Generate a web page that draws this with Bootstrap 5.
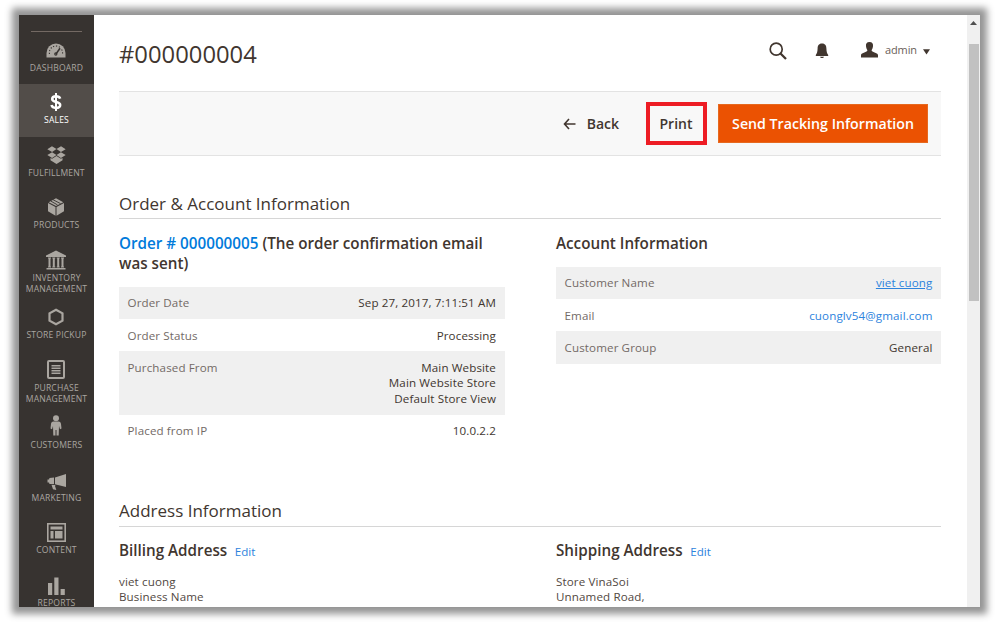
<!DOCTYPE html>
<html lang="en">
<head>
<meta charset="utf-8">
<title>#000000004</title>
<link href="https://cdn.jsdelivr.net/npm/bootstrap@5.3.0/dist/css/bootstrap.min.css" rel="stylesheet">
<style>
body{background:#fff;font-family:"Open Sans",sans-serif;width:999px;height:622px;overflow:hidden;padding:15px 19px}
.frame{width:961px;height:592px;background:#fff;box-shadow:0 0 7px 7px #959595;overflow:hidden}
.side{width:75px;background:#373330;color:#aaa6a0;flex:none}
.side-top{height:16.5px;padding:16px 12px 0}
.side-top div{height:1px;background:#736963}
.side-item{height:52.5px;font-size:8.6px;line-height:11px;letter-spacing:.16px;text-align:center;color:#aaa6a0;text-decoration:none;flex:none}
.side-item.tall{height:57.5px}
.side-item.on{background:#524d49;color:#fff}
.side-item .ico{height:24px;margin-top:6px;margin-bottom:1px;margin-right:1px;flex:none}
.side-item svg{fill:currentColor;display:block}
.main-in{margin-left:25px;width:822px}
.head{height:76px}
.head h1{font-size:23.8px;line-height:30px;margin:24px 0 0;color:#41362f;font-weight:400}
.tools{padding:27px 11px 0 0;height:100%}
.bell{margin-left:28px}
.person{margin-left:32px}
.caret{margin:7px 0 0 6px}
.user{font-size:11px;color:#6a6058;line-height:16px;letter-spacing:-.1px}
.tools .user{margin-left:7px}
.bar{height:65px;background:#f8f8f8;border-top:1px solid #e3e3e3;border-bottom:1px solid #e3e3e3;padding-right:13px;font-size:14px;font-weight:600;color:#41362f}
.back-label{margin-left:11px}
.print{width:61px;height:43px;border:4px solid #ed1c24;margin:0 11px 1px 27px;padding:1px 1px 0 0}
.send{width:210px;height:39px;background:#eb5202;color:#fff;border-radius:0;font-size:14.2px;font-weight:600;padding:0;text-align:center;border:1px solid #e6691f}
.sect{font-size:17px;line-height:22px;border-bottom:1px solid #d6d6d6;margin:0;font-weight:400;color:#41362f;padding-bottom:3.5px}
.sect-first{margin-top:36.5px;padding-bottom:3px}
.sub{font-size:15.23px;line-height:20px;font-weight:600;margin:0;color:#41362f;white-space:nowrap}
.halves{display:grid;grid-template-columns:385.5px 385px;column-gap:51.5px}
.order-halves{padding-top:14.2px;height:281.5px}
.order-halves .sub{margin-bottom:13.9px}
.address-halves{padding-top:13.5px}
.kv{padding:8.6px 8.5px 8.3px;line-height:15.5px;font-size:11.6px;color:#41362f;letter-spacing:.12px}
.kv:nth-child(odd){background:#f0f0f0}
.kv span:first-child{color:#736a66}
.kv a,.edit{color:#2d83dd}
.edit{font-size:11.6px;font-weight:400;margin-left:7.5px;text-decoration:none}
.big{color:#007bdb;text-decoration:none}
.addr{font-size:11.6px;line-height:15.5px;color:#524842;letter-spacing:.12px;margin:11.5px 0 0}
.scroll{width:13px;background:#f0f0f0;flex:none}
.scroll svg{margin:5.5px 0 19.5px}
.thumb{width:10px;height:257px;background:#c1c1c1}
</style>
</head>
<body>
<div class="frame d-flex">
  <nav class="side d-flex flex-column overflow-hidden">
    <div class="side-top"><div></div></div>
    <a class="side-item d-flex flex-column align-items-center" href="#" ><span class="ico d-flex align-items-center"><svg width="20" height="20" viewBox="0 0 20 20"><path d="M.5 17.500V13a9.500 9.500 0 0 1 19 0v4.500z"/><g fill="none" stroke="#373330" stroke-width="1.100"><path d="M3.500 14a6.600 6.600 0 0 1 11-6.200M15.600 9.500a6.500 6.500 0 0 1 .9 4.500" stroke-dasharray="1.200 1.700"/><path d="M9.700 14.400 14 8.300" stroke-width="1.600"/><circle cx="9.800" cy="14" r="1.100"/></g></svg></span>DASHBOARD</a>
    <a class="side-item on d-flex flex-column align-items-center" href="#"><span class="ico d-flex align-items-center"><svg width="12" height="18" viewBox="0 0 12 18"><path d="M6 0v18" stroke="#fff" stroke-width="2"/><path d="M10.200 5.600C9.600 3.900 8 3.200 6 3.200 3.700 3.200 2.200 4.300 2.200 6c0 4 8 2 8 6 0 1.900-1.700 2.900-4.200 2.900-2.300 0-4-.9-4.500-2.900" fill="none" stroke="#fff" stroke-width="2.500"/></svg></span>SALES</a>
    <a class="side-item d-flex flex-column align-items-center" href="#"><span class="ico d-flex align-items-center"><svg width="19" height="18" viewBox="0 0 18 18" preserveAspectRatio="none"><path d="M4.700.3 9 3 4.800 5.900.3 3.200zM13.300.3 9 3l4.200 2.900 4.500-2.700zM4.800 6.300 9 9l-4.200 2.900L.3 9zM13.200 6.300 9 9l4.200 2.900L17.700 9zM9 10l4.200 2.800 1.500-.8v2.300L9 18l-5.700-3.700V12l1.500.8z"/></svg></span>FULFILLMENT</a>
    <a class="side-item d-flex flex-column align-items-center" href="#"><span class="ico d-flex align-items-center"><svg width="16" height="18" viewBox="0 0 16 18"><path d="M8.500 9 16 5v8.300L8.500 17.700zM0 5l7.500 4v8.700L0 13.300zM.7 4.200 8 .2l7.300 4L8 8.100z"/><path d="M2.700 3 9.500 6.900M5 1.700 12.500 5.600" fill="none" stroke="#373330" stroke-width=".9"/></svg></span>PRODUCTS</a>
    <a class="side-item tall d-flex flex-column align-items-center" href="#"><span class="ico d-flex align-items-center"><svg width="20" height="20" viewBox="0 0 20 20"><path d="M10 .5 20 5.500v1.500H0V5.500zM2 7.500h3v1H4.500v8H5v1H2v-1h.5v-8H2zM6.300 7.500h3v1h-.5v8h.5v1h-3v-1h.5v-8h-.5zM10.700 7.500h3v1h-.5v8h.5v1h-3v-1h.5v-8h-.5zM15 7.500h3v1h-.5v8h.5v1h-3v-1h.5v-8H15zM.5 18h19v1.500H.5z"/></svg></span>INVENTORY<br>MANAGEMENT</a>
    <a class="side-item d-flex flex-column align-items-center" href="#"><span class="ico d-flex align-items-center"><svg width="16" height="18" viewBox="0 0 16 18"><path d="M8 1.700 14.500 5.300v7.400L8 16.300 1.500 12.700V5.300z" fill="none" stroke="currentColor" stroke-width="2.200"/></svg></span>STORE PICKUP</a>
    <a class="side-item tall d-flex flex-column align-items-center" href="#"><span class="ico d-flex align-items-center"><svg width="18" height="19" viewBox="0 0 18 19"><rect x="1" y="1" width="16" height="17" rx="1" fill="none" stroke="currentColor" stroke-width="2"/><path d="M4.500 5h9v1.400h-9zM4.500 7.500h9v1.400h-9zM4.500 10h9v1.400h-9zM4.500 12.500h9v1.400h-9z"/></svg></span>PURCHASE<br>MANAGEMENT</a>
    <a class="side-item d-flex flex-column align-items-center" href="#"><span class="ico d-flex align-items-start"><svg width="12" height="21" viewBox="0 0 12 21"><circle cx="6" cy="3.200" r="3"/><path d="M3.500 6.500h5c1.700 0 2.300 1 2.500 2.500l.5 4.500-1.500.7-1-3.200-.3 9.500H6.500V15h-1v5.500H3.300L3 11l-1 3.200-1.500-.7L1 9c.2-1.500.8-2.500 2.500-2.500z"/></svg></span>CUSTOMERS</a>
    <a class="side-item d-flex flex-column align-items-center" href="#"><span class="ico d-flex align-items-end"><svg width="19" height="18" viewBox="0 0 19 18"><path d="M19 0v13L8 10.300V3.500zM7 3.600v6.500H2.500L2 8.500H.5v-3H2l.5-1.500zM4.500 10.800l4 .3-.5 1 1.300 4L6 15.300z"/></svg></span>MARKETING</a>
    <a class="side-item d-flex flex-column align-items-center" href="#"><span class="ico d-flex align-items-center"><svg width="19" height="19" viewBox="0 0 19 19"><rect x=".8" y=".8" width="17.400" height="17.400" fill="none" stroke="currentColor" stroke-width="1.600"/><path d="M3.500 3.500h12v3h-12zM3.500 8h3v7.500h-3zM8 8h7.500v7.500H8z"/></svg></span>CONTENT</a>
    <a class="side-item d-flex flex-column align-items-center" href="#"><span class="ico d-flex align-items-end"><svg width="17" height="20" viewBox="0 0 17 20"><path d="M0 6h4.200v12H0zM6.300.500h4.200V18H6.300zM12.600 12h4.200v6h-4.200z"/></svg></span>REPORTS</a>
  </nav>
  <main class="flex-grow-1 overflow-hidden">
    <div class="main-in">
      <header class="head d-flex justify-content-between">
        <h1>#000000004</h1>
        <div class="tools d-flex align-items-start">
          <svg width="18" height="18" viewBox="0 0 18 18" fill="none" stroke="#41362f"><circle cx="7.200" cy="7.200" r="6" stroke-width="1.700"/><path d="m11.500 11.500 5.500 5.500" stroke-width="2.300"/></svg>
          <svg class="bell" width="14" height="17" viewBox="0 0 14 17" fill="#41362f"><path d="M7 1.500c3.500 0 4.300 2.400 4.400 5 .1 3.500.7 4.700 1.800 6.500v1H.8v-1c1.100-1.800 1.700-3 1.800-6.500.1-2.600.9-5 4.400-5zM5 14.700h4C8.700 16.500 5.300 16.500 5 14.700z"/></svg>
          <svg class="person" width="17" height="16" viewBox="0 0 17 16" fill="#41362f"><path d="M8.500 0c2.800 0 3.800 1.800 3.500 4.300-.2 2-1 3.200-1.400 4 0 2 5.900 2.200 6.400 4.700V15.500H0V13c.5-2.500 6.400-2.700 6.400-4.700C6 7.500 5.200 6.300 5 4.300 4.700 1.800 5.700 0 8.500 0z"/></svg>
          <span class="user">admin</span>
          <svg class="caret" width="7" height="6" viewBox="0 0 7 6"><path d="M0 .3h7L3.500 5.500z" fill="#41362f"/></svg>
        </div>
      </header>
      <div class="bar d-flex align-items-center justify-content-end">
        <svg width="13" height="12" viewBox="0 0 13 12" fill="none" stroke="#41362f" stroke-width="1.600"><path d="M6 1 1.500 6 6 11M1.500 6h11"/></svg>
        <span class="back-label">Back</span>
        <div class="print d-flex align-items-center justify-content-center">Print</div>
        <button class="btn send">Send Tracking Information</button>
      </div>
      <h2 class="sect sect-first">Order &amp; Account Information</h2>
      <div class="halves order-halves">
        <section>
          <h3 class="sub"><a class="big" href="#">Order # 000000005</a> (The order confirmation email<br>was sent)</h3>
          <div>
            <div class="kv d-flex justify-content-between"><span>Order Date</span><span>Sep 27, 2017, 7:11:51 AM</span></div>
            <div class="kv d-flex justify-content-between"><span>Order Status</span><span>Processing</span></div>
            <div class="kv d-flex justify-content-between"><span>Purchased From</span><span class="text-end">Main Website<br>Main Website Store<br>Default Store View</span></div>
            <div class="kv d-flex justify-content-between"><span>Placed from IP</span><span>10.0.2.2</span></div>
          </div>
        </section>
        <section>
          <h3 class="sub">Account Information</h3>
          <div>
            <div class="kv d-flex justify-content-between"><span>Customer Name</span><a href="#">viet cuong</a></div>
            <div class="kv d-flex justify-content-between"><span>Email</span><a class="text-decoration-none" href="#">cuonglv54@gmail.com</a></div>
            <div class="kv d-flex justify-content-between"><span>Customer Group</span><span>General</span></div>
          </div>
        </section>
      </div>
      <h2 class="sect">Address Information</h2>
      <div class="halves address-halves">
        <section><h3 class="sub">Billing Address<a class="edit" href="#">Edit</a></h3>
          <address class="addr">viet cuong<br>Business Name</address></section>
        <section><h3 class="sub">Shipping Address<a class="edit" href="#">Edit</a></h3>
          <address class="addr">Store VinaSoi<br>Unnamed Road,</address></section>
      </div>
    </div>
  </main>
  <div class="scroll d-flex flex-column align-items-center">
    <svg width="7" height="4" viewBox="0 0 7 4"><path d="M0 4 3.500 0 7 4z" fill="#505050"/></svg>
    <div class="thumb"></div>
  </div>
</div>
<script src="https://cdn.jsdelivr.net/npm/bootstrap@5.3.0/dist/js/bootstrap.bundle.min.js"></script>
</body>
</html>
